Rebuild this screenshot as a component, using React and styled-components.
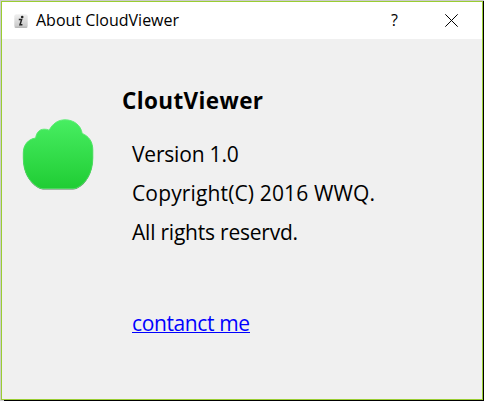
import React from "react";
import styled, { createGlobalStyle } from "styled-components";

const GlobalStyle = createGlobalStyle`
  body { margin: 0; background: #000; overflow: hidden; }
`;

const Desktop = styled.div`
  box-sizing: border-box;
  width: 484px;
  height: 401px;
  padding: 1px;
  background:
    linear-gradient(#cccccc, #cccccc) 0 0 / 484px 1px no-repeat,
    linear-gradient(#cccccc, #cccccc) 0 0 / 1px 401px no-repeat,
    linear-gradient(#cccccc, #cccccc) 0 400px / 4px 1px no-repeat,
    #000;
`;

const Dialog = styled.section`
  box-sizing: border-box;
  height: 399px;
  border: 1px solid #9acd32;
  background: #f0f0f0;
  color: #000;
  font-family: "Open Sans", "Noto Sans", sans-serif;
`;

const TitleBar = styled.header`
  display: flex;
  align-items: center;
  height: 37px;
  padding-left: 12px;
  background: #fff;
`;

const Title = styled.h1`
  flex: 1;
  margin: 0 0 0 8px;
  font-size: 16px;
  font-weight: 400;
  line-height: 37px;
  white-space: nowrap;
`;

const CaptionButton = styled.button`
  display: flex;
  align-items: center;
  justify-content: center;
  width: ${(p) => p.$width};
  height: 37px;
  padding: 0;
  border: 0;
  background: transparent;
  color: #000;
  font: 400 16px/37px "Open Sans", sans-serif;
`;

const Content = styled.main`
  display: flex;
  padding: 42px 0 0 18px;
`;

const Logo = styled.svg`
  flex: none;
  width: 76px;
  height: 76px;
  margin-top: 36px;
`;

const Details = styled.div`
  display: flex;
  flex-direction: column;
  align-items: flex-start;
  margin-left: 26px;
`;

const Heading = styled.h2`
  margin: 0 0 15px;
  font-size: 22.5px;
  font-weight: 700;
  line-height: 39px;
  letter-spacing: 0.38px;
  white-space: nowrap;
`;

const Line = styled.p`
  margin: 0 0 0 10px;
  font-size: 21px;
  line-height: 39px;
  letter-spacing: ${(p) => p.$spacing};
  white-space: nowrap;
`;

const Contact = styled.a`
  height: 20px;
  margin: 60px 0 0 10px;
  border-bottom: 1px solid #0000ff;
  color: #0000ff;
  font-size: 21px;
  line-height: 23px;
  letter-spacing: -0.38px;
  text-decoration: none;
  white-space: nowrap;
`;

const InfoIcon = () => (
  <svg width="14" height="14" viewBox="0 0 14 14" aria-hidden="true">
    <defs>
      <linearGradient id="tile" x2="0" y2="1">
        <stop offset="0" stopColor="#f0f0f0" />
        <stop offset="1" stopColor="#c6c6c6" />
      </linearGradient>
    </defs>
    <rect x=".3" y=".3" width="13.4" height="13.4" rx="2" fill="url(#tile)" />
    <path d="M.8 13.3h12.4" stroke="#aaa" strokeWidth=".8" />
    <circle cx="8.2" cy="3" r="1.3" fill="#222" />
    <path d="M4.8 5.6H7.6L6 10.8H8.4" fill="none" stroke="#222" strokeWidth="1.5" />
  </svg>
);

const CloudLogo = () => (
  <Logo viewBox="20 117 76 76" aria-hidden="true">
    <defs>
      <linearGradient id="cloud" x1="0" y1="119" x2="0" y2="190" gradientUnits="userSpaceOnUse">
        <stop offset="0" stopColor="#48ee62" />
        <stop offset="1" stopColor="#1fcc33" />
      </linearGradient>
      <linearGradient id="rim" x1="0" y1="119" x2="0" y2="190" gradientUnits="userSpaceOnUse">
        <stop offset="0" stopColor="#62ee79" />
        <stop offset=".75" stopColor="#43dc57" />
        <stop offset="1" stopColor="#56df68" />
      </linearGradient>
      <filter id="soft" x="-10%" y="-10%" width="120%" height="120%">
        <feGaussianBlur stdDeviation=".7" />
      </filter>
      <path
        id="shape"
        d="M35.7 138C36.4 132.3 39.5 129.3 44 129.2Q46.5 129 49.2 130.2C52.7 123.5 58 119.8 65 119.8C74.1 119.8 80.9 125.4 82.2 133.4C89.2 136.4 92.8 142 92.8 150V158C92.8 171.8 86.3 183.7 76.8 187.9Q75.3 188.7 73 188.7H43Q40.5 188.7 38.2 187.3C28.8 181.8 23.3 171.3 23.3 158V153C23.3 144.8 28.2 139 35.7 138Z"
      />
    </defs>
    <use href="#shape" y=".8" fill="#444" opacity=".75" filter="url(#soft)" />
    <use href="#shape" fill="url(#cloud)" stroke="url(#rim)" strokeWidth="1" />
  </Logo>
);

export default function App() {
  return (
    <>
      <GlobalStyle />
      <Desktop>
        <Dialog>
          <TitleBar>
            <InfoIcon />
            <Title>About CloudViewer</Title>
            <CaptionButton $width="53px" aria-label="Help">?</CaptionButton>
            <CaptionButton $width="61px" aria-label="Close">
              <svg width="13" height="13" viewBox="0 0 13 13">
                <path d="M.3 .3l12.4 12.4M12.7 .3l-12.4 12.4" stroke="#000" strokeWidth="1" />
              </svg>
            </CaptionButton>
          </TitleBar>
          <Content>
            <CloudLogo />
            <Details>
              <Heading>CloutViewer</Heading>
              <Line $spacing="-0.2px">Version 1.0</Line>
              <Line $spacing="0.14px">Copyright(C) 2016 WWQ.</Line>
              <Line $spacing="-0.22px">All rights reservd.</Line>
              <Contact href="#contact">contanct me</Contact>
            </Details>
          </Content>
        </Dialog>
      </Desktop>
    </>
  );
}
